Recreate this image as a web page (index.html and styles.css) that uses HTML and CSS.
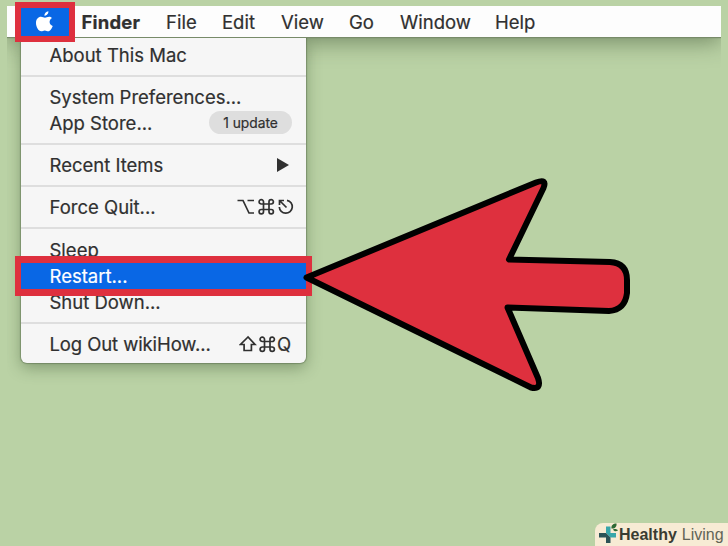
FILE: index.html
```
<!DOCTYPE html>
<html>
<head>
<meta charset="utf-8">
<title>Restart</title>
<link rel="stylesheet" href="styles.css">
</head>
<body>
<div class="desktop">
<div class="menubar">
<div class="apple">
<svg width="20" height="24" viewBox="0 0 20 24"><path fill="#fff" d="M13.4 1.2c.2 2.3-1.7 4.5-4 4.5C9.200 3.500 11.100 1.500 13.400 1.200zM16.900 7.900c-3.500 2.200-2.800 6.700.8 8-.8 2.300-2.500 5.300-4.500 5.300-1.300 0-1.800-.8-3.400-.8s-2.200.8-3.500.8C3.400 21.200 1 16.600 1 12.900c0-3.700 2.300-6.100 5-6.100 1.600 0 2.700 1 4 1 1.200 0 2.300-1 4.200-1 1.100 0 2.100.4 2.700 1.100z"/></svg>
</div>
<span class="finder">Finder</span>
<span class="file">File</span>
<span class="edit">Edit</span>
<span class="view">View</span>
<span class="go">Go</span>
<span class="window">Window</span>
<span class="help">Help</span>
</div>
<div class="menu">
<div class="item">About This Mac</div>
<div class="line"></div>
<div class="item">System Preferences...</div>
<div class="item">App Store...<span class="badge">1 update</span></div>
<div class="line"></div>
<div class="item">Recent Items<svg class="sub" width="12" height="14" viewBox="0 0 12 14"><path fill="#303030" d="M0 0l12 7-12 7z"/></svg></div>
<div class="line"></div>
<div class="item">Force Quit...
<svg class="keys" width="57" height="18" viewBox="0 0 57 18"><g class="stroke"><path d="M.5 2.500H6l6 12.500h5M10.500 2.500H17"/><path d="M26.500 6h5.500v5.500h-5.500zM26.500 6h-2.100a2.200 2.200 0 1 1 2.100-2.200zM32 6V3.800A2.200 2.200 0 1 1 34.200 6zM26.500 11.500v2.200a2.200 2.200 0 1 1-2.200-2.200zM32 11.500h2.200a2.200 2.200 0 1 1-2.200 2.200z"/><path d="M50 2.300A6.500 6.500 0 1 1 42.300 9M49.500 9.500L43 3M42.500 7V2.500H47"/></g></svg>
</div>
<div class="line"></div>
<div class="item">Sleep</div>
<div class="item selected">Restart...</div>
<div class="item">Shut Down...</div>
<div class="line"></div>
<div class="item logout">Log Out wikiHow...
<span class="keys quit"><svg width="38" height="18" viewBox="0 0 38 18"><g class="stroke"><path d="M9 2L1.500 9.500h3.600v6h7.300v-6H16z"/><path d="M25.500 6.500H31V12h-5.500zM25.500 6.500h-2.100a2.200 2.200 0 1 1 2.100-2.200zM31 6.500V4.300a2.200 2.200 0 1 1 2.200 2.200zM25.500 12v2.200a2.200 2.200 0 1 1-2.200-2.200zM31 12h2.200a2.200 2.200 0 1 1-2.200 2.200z"/></g></svg>Q</span>
</div>
</div>
<div class="frame frame-apple"></div>
<div class="frame frame-restart"></div>
<svg class="arrow" width="728" height="546" viewBox="0 0 728 546"><path d="M306.500 277.500L536 182.500Q547.500 178 543.500 188L509 259.500L610 262Q627 263 627 280V293Q625 310 609 311L507.500 307.500L538 378Q542 390 531 387.500Z"/></svg>
<div class="logo">
<svg width="21" height="23" viewBox="0 0 21 23"><path fill="#38a6aa" d="M8 3.500h4.500V10H18v4.500h-5.500L8 10z"/><path fill="#2b5256" d="M1 10h7l4.500 4.500V20H8v-5.500H1z"/><path fill="#2d6a35" d="M13.500 5.500c-.5-3 1.500-5 5-5 .5 3-1.500 5.500-5 5zM15 6.500c2-.9 4-.5 5 1-2 1.300-4 1-5-1z"/></svg>
<b>Healthy</b><span>Living</span>
</div>
</div>
</body>
</html>
```

FILE: styles.css
```
body {
margin: 0;
font-family: Inter, "Liberation Sans", sans-serif;
font-size: 18.5px;
color: #303030;
-webkit-text-stroke: 0.2px;
}
.desktop {
position: relative;
width: 728px; height: 546px;
box-sizing: border-box; padding: 6px 7px;
background: #bad2a5;
overflow: hidden;
}
.menubar {
display: flex; align-items: center;
height: 31px; width: 714px;
background: #fdfdfd;
box-shadow: 0 1px 1px #788b69, 0 5px 22px rgba(50,70,40,0.5);
clip-path: inset(0 0 -40px 0);
white-space: nowrap;
}
.menubar span {
flex: none;
}
.apple {
display: flex; align-items: center; justify-content: center;
width: 48px; height: 28px; margin-left: 14px;
background: #0967e5;
}
.menubar .finder { width: 84.500px; margin-left: 12.500px; font-weight: 700; letter-spacing: 0.2px; }
.file { width: 56px; }
.edit { width: 59px; }
.view { width: 68px; }
.go { width: 51px; }
.window { width: 95px; }
.menu {
position: relative;
width: 285px; height: 325px;
box-sizing: border-box;
margin: 1px 0 0 14px; padding-top: 3.800px;
background: #f6f6f6;
border-radius: 0 0 6px 6px;
box-shadow: 0 0 1px 1px rgba(70,90,60,0.4), 0 5px 15px rgba(50,75,40,0.4);
clip-path: inset(0 -40px -40px -14px);
}
.item {
display: flex; align-items: center;
height: 26px; padding: 0 14px 0 28.500px;
box-sizing: border-box;
white-space: nowrap;
}
.logout { letter-spacing: -0.1px; }
.selected {
background: #0967e5;
color: #fff;
}
.line {
height: 16.200px;
background: linear-gradient(#dedede, #dedede) center / 100% 2px no-repeat;
}
.badge {
margin-left: auto;
width: 83px; height: 23px;
border-radius: 12px;
background: #dedede;
font-size: 13.800px; line-height: 24px;
text-align: center;
}
.sub { margin-left: auto; margin-right: 3px; }
.keys { margin-left: auto; margin-right: -2px; }
.quit { display: flex; align-items: center; margin-right: 1px; }
.stroke {
fill: none;
stroke: #303030; stroke-width: 1.700;
}
.frame {
position: absolute;
box-sizing: border-box;
border: 6px solid #de303e;
}
.frame-apple { left: 15px; top: 2px; width: 60px; height: 40px; }
.frame-restart { left: 15px; top: 256px; width: 297px; height: 40px; border-width: 7px 6px; }
.arrow {
position: absolute;
left: 0; top: 0;
fill: #de303e;
stroke: #000; stroke-width: 6; stroke-linejoin: round;
}
.logo {
position: absolute;
right: 0; bottom: 0;
display: flex; align-items: center;
width: 133px; height: 23px;
box-sizing: border-box; padding-left: 3px;
background: #f7ebd4;
border-radius: 8px 0 0 0;
font-family: "Liberation Sans", Arial, sans-serif;
font-size: 16px;
color: #393c32;
-webkit-text-stroke: 0;
}
.logo b { letter-spacing: 0; }
.logo span { margin-left: 5px; color: #626457; }
```
